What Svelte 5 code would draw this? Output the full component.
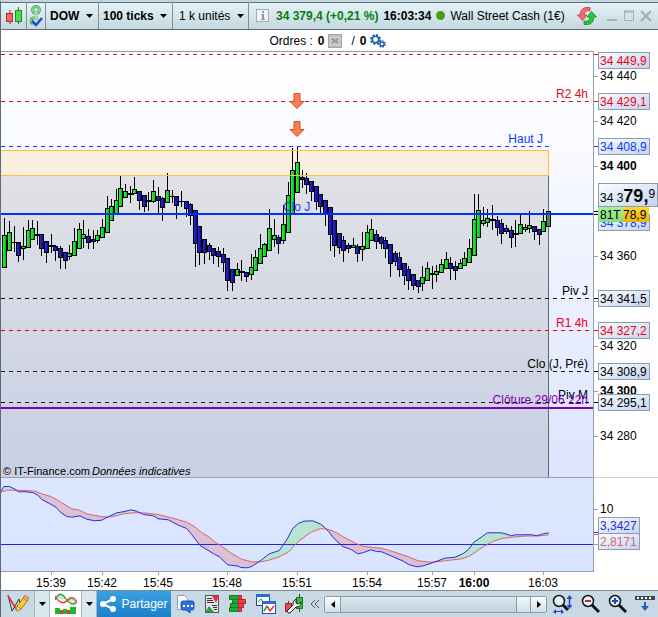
<script lang="ts">
  type Dir = 'up' | 'down' | 'flat';

  const AXIS_WIDTH = 64;
  const BASE_WIDTH = 594;
  const TOP = 51;
  const HEIGHT = 539;

  let width = $state(658);
  let plot = $derived(width - AXIS_WIDTH);
  let scale = $derived(plot / BASE_WIDTH);
  let label = $derived(plot + 4);

  const sx = (x: number) => Math.round(x * scale);

  // x, high, body top, body bottom, low, direction (g = up, b = down, d = flat)
  const raw = `4 218 235 268 268 g|9 221 232 251 251 g|14 226 242 243 252 d|18 242 242 256 262 b|23 227 246 249 260 g
28 220 230 248 248 g|32 220 228 240 240 g|37 221 234 236 245 d|41 234 234 249 256 b|46 241 241 253 263 b
51 234 245 247 253 d|55 245 246 251 261 b|60 246 248 258 269 b|65 252 252 261 269 b|69 245 253 257 260 g
74 228 241 256 256 g|79 223 229 249 249 g|83 220 234 239 248 g|88 229 236 243 249 b|93 230 239 242 249 b
97 230 235 241 243 g|102 219 227 238 238 g|107 196 208 233 233 g|111 199 206 221 221 g|116 189 200 214 214 g
120 176 188 207 207 g|125 184 191 198 198 g|130 186 193 195 203 d|134 177 189 194 194 g|139 191 191 201 210 b
144 195 195 207 212 b|148 192 200 202 211 d|153 180 191 202 203 g|158 187 196 201 213 b|162 197 198 208 221 b
167 173 190 203 203 g|172 190 196 197 203 d|176 196 196 206 219 b|181 191 201 202 207 d|186 201 201 209 217 b
190 203 204 216 225 b|195 210 210 244 267 b|199 226 226 253 265 b|204 239 239 253 264 b|209 243 245 252 260 b
213 248 248 256 264 b|218 247 251 257 267 b|223 248 254 263 272 b|227 258 258 281 291 b|232 269 269 283 291 b
237 263 269 276 276 g|241 260 271 273 281 d|246 272 272 277 282 b|251 254 267 275 280 g|255 250 257 271 271 g
260 234 248 264 264 g|264 243 244 257 257 g|269 209 228 251 251 g|274 219 235 240 247 g|278 235 237 244 254 b
283 205 224 241 244 g|288 182 195 233 233 g|292 148 170 214 214 g|297 147 162 193 193 g|302 170 177 180 188 b
306 173 178 185 194 b|311 181 181 192 201 b|316 186 186 202 210 b|320 194 194 207 214 b|325 200 200 215 226 b
330 207 207 235 251 b|334 220 220 246 257 b|339 233 233 248 254 b|343 236 240 251 262 b|348 243 245 249 253 b
353 238 245 248 248 g|357 244 246 254 262 b|362 232 246 250 261 g|367 225 232 249 249 g|371 219 229 241 241 g
376 230 234 242 249 b|381 236 237 244 249 b|385 237 240 249 258 b|390 244 244 264 277 b|395 251 253 262 266 b
399 252 257 270 277 b|404 263 263 276 285 b|408 266 269 281 290 b|413 274 274 286 290 b|418 280 280 287 293 b
422 266 277 284 291 g|427 262 268 281 281 g|432 266 273 275 289 d|436 265 271 275 282 g|441 259 264 273 273 g
446 252 259 269 269 g|450 257 263 269 280 b|455 261 266 271 280 b|460 259 263 269 269 g|464 252 258 266 266 g
469 239 248 263 263 g|474 194 219 256 256 g|478 194 210 238 238 g|483 207 220 224 226 g|487 209 218 223 227 g
492 205 219 221 230 d|497 216 220 228 236 b|501 219 223 234 244 b|506 225 228 232 234 b|511 226 230 238 248 b
515 220 233 235 247 d|520 215 224 234 234 g|525 224 227 230 232 g|529 211 225 229 233 g|534 226 226 232 240 b
539 229 229 235 245 b|543 209 221 232 232 g|548 211 211 227 227 g`;

  const dirs: Record<string, Dir> = { g: 'up', b: 'down', d: 'flat' };

  const candles = raw.split(/[|\n]/).map((row) => {
    const [x, high, top, bottom, low, dir] = row.trim().split(' ');
    return { x: +x, high: +high, top: +top, bottom: +bottom, low: +low, dir: dirs[dir] };
  });

  // Indicator samples, three steps to the pixel
  const fast = `3,122 12,108 28,108 45,116 55,124 80,124 100,127 115,135 125,147 150,160 168,170 180,184 200,198 215,200 240,196 260,206
285,211 305,209 325,199 350,187 375,183 392,178 410,182 430,192 460,196 475,205 505,208 535,224 560,234 575,252 600,285 630,303 640,309
658,319 683,343 715,347 722,351 740,352 755,348 785,328 808,310 838,300 862,265 878,234 895,219 912,212 938,211 962,221 975,232
990,248 1000,262 1028,288 1055,298 1073,310 1088,307 1112,298 1130,303 1145,304 1175,317 1210,332 1228,343 1252,349 1270,346 1300,336
1335,323 1365,320 1390,309 1405,297 1422,275 1448,257 1462,247 1505,247 1535,256 1545,253 1595,253 1610,256 1630,250 1646,247`;
  const slow = `3,125 20,119 55,119 105,122 125,130 150,137 170,147 185,157 215,175 238,179 260,190 285,195 310,199 335,199 370,190 400,187
430,187 475,192 525,205 560,215 580,226 605,246 628,260 645,275 665,287 695,309 715,320 725,326 755,334 785,334 810,328 835,320
865,305 893,275 915,258 935,244 960,235 975,235 990,238 1010,247 1035,262 1070,280 1088,287 1120,291 1145,293 1175,302 1225,319
1255,331 1295,335 1335,331 1385,325 1405,318 1425,306 1440,295 1462,282 1480,272 1505,264 1535,260 1570,257 1620,256 1646,253`;

  function curve(samples: string, k: number): string[] {
    return samples.split(/\s+/).map((s) => {
      const [x, y] = s.split(',').map(Number);
      return `${((x / 3) * k).toFixed(1)},${(450.5 + y / 3).toFixed(1)}`;
    });
  }

  let fastLine = $derived(curve(fast, scale));
  let slowLine = $derived(curve(slow, scale));
  let band = $derived([...fastLine, ...[...slowLine].reverse()].join(' '));
  let above = $derived(`0,478 0,492 ${slowLine.join(' ')} ${plot},535 ${plot},478`);

  const levels = [
    { y: 54, color: '#f00014', name: '', end: 0, text: 0, full: true },
    { y: 101, color: '#d8101c', name: 'R2 4h', end: 588, text: 98, full: true },
    { y: 146, color: '#0a3cff', name: 'Haut J', end: 543, text: 143, full: false },
    { y: 298, color: '#000', name: 'Piv J', end: 588, text: 295, full: true },
    { y: 330, color: '#f00014', name: 'R1 4h', end: 588, text: 327, full: true },
    { y: 371, color: '#000', name: 'Clo (J, Pré)', end: 588, text: 368, full: true },
    { y: 402, color: '#000', name: 'Piv M', end: 588, text: 399, full: true }
  ];

  const ticks = [
    { y: 76, text: '34 440' },
    { y: 121, text: '34 420' },
    { y: 166, text: '34 400', bold: true },
    { y: 256, text: '34 360' },
    { y: 301, text: '' },
    { y: 346, text: '34 320' },
    { y: 391, text: '34 300', bold: true },
    { y: 436, text: '34 280' },
    { y: 509, text: '10' },
    { y: 544, text: '' }
  ];

  const tags = [
    { y: 52, text: '34 449,9', color: '#f00014' },
    { y: 93, text: '34 429,1', color: '#f00014' },
    { y: 138, text: '34 408,9', color: '#0a3cff' },
    { y: 214, text: '34 378,9', color: '#0a3cff' },
    { y: 290, text: '34 341,5', color: '#000' },
    { y: 322, text: '34 327,2', color: '#f00014' },
    { y: 363, text: '34 308,9', color: '#000' },
    { y: 394, text: '34 295,1', color: '#000' }
  ];

  const times = [
    { x: 51, text: '15:39' },
    { x: 102, text: '15:42' },
    { x: 158, text: '15:45' },
    { x: 227, text: '15:48' },
    { x: 297, text: '15:51' },
    { x: 367, text: '15:54' },
    { x: 432, text: '15:57' },
    { x: 474, text: '16:00', bold: true },
    { x: 543, text: '16:03' }
  ];
</script>

{#snippet caret()}
  <svg class="caret" width="7" height="4" viewBox="0 0 7 4" aria-hidden="true"><path d="M0 0h7L3.5 4z" /></svg>
{/snippet}

<div class="window">
  <header class="titlebar">
    <button class="cell candle-button" aria-label="Style du graphique">
      <svg width="18" height="18" viewBox="0 0 18 18">
        <path d="M5 3v14" stroke="#a01c24" />
        <rect x="1.5" y="6.5" width="6" height="8" fill="#f0686c" stroke="#b42830" />
        <path d="M13.5 0v17" stroke="#118018" />
        <rect x="10.5" y="3.5" width="6" height="11" fill="#4ed850" stroke="#159020" />
      </svg>
    </button>
    <button class="cell link-button" aria-label="Lier">
      <svg width="14" height="22" viewBox="0 0 14 22">
        <g fill="none" stroke="#56ac62" stroke-width="3">
          <circle cx="7" cy="5" r="3.5" />
          <path d="M4 19c-3-2-2-6 1-6h4" />
        </g>
        <g fill="none" stroke="#a6e2aa">
          <circle cx="7" cy="5" r="3.5" />
          <path d="M7 5v9" stroke-width="2" />
          <path d="M4 19c-3-2-2-6 1-6h4" />
        </g>
        <path d="M3 16l4 4 6-7" fill="none" stroke="#1450d0" stroke-width="2.5" />
      </svg>
    </button>
    <label class="cell combo">
      <select aria-label="Instrument"><option>DOW</option></select>
      {@render caret()}
    </label>
    <label class="cell combo">
      <select aria-label="Unité de temps"><option>100 ticks</option></select>
      {@render caret()}
    </label>
    <label class="cell combo plain">
      <select aria-label="Historique"><option>1 k unités</option></select>
      {@render caret()}
    </label>
    <div class="quote">
      <button class="icon" aria-label="Informations">
        <svg width="13" height="13" viewBox="0 0 13 13">
          <rect x=".5" y=".5" width="12" height="12" fill="#f3f6f8" stroke="#a0acb4" />
          <path d="M6 2h2v2H6zM5 5h3v5h1v1H5v-1h1V6H5z" fill="#8e9aa2" />
        </svg>
      </button>
      <strong class="price">34 379,4 (+0,21 %)</strong>
      <strong>16:03:34</strong>
      <span class="dot"></span>
      <span>Wall Street Cash (1€)</span>
    </div>
    <div class="controls">
      <button class="icon refresh" aria-label="Actualiser">
        <svg width="20" height="18" viewBox="0 0 20 18">
          <path d="M13 .5C7-.5 3 2.500 3.300 8H.5L5.500 13.500 10 8H7.200c0-3 2-5 5.800-4z" fill="#f46a68" stroke="#cc343a" stroke-width=".8" />
          <path d="M7 17.500c6 1 10-2 9.700-7.500h2.800L14.500 4.500 10 10h2.800c0 3-2 5-5.800 4z" fill="#2cc438" stroke="#118a1c" stroke-width=".8" />
        </svg>
      </button>
      <button class="icon" aria-label="Réduire">
        <svg width="12" height="12" viewBox="0 0 12 12"><path d="M1 10h10" stroke="#a4b0b8" stroke-width="2" /></svg>
      </button>
      <button class="icon" aria-label="Agrandir">
        <svg width="12" height="12" viewBox="0 0 12 12">
          <path d="M1.5 1v9.5h9V1" fill="none" stroke="#a4b0b8" />
          <path d="M1 1.500h10" stroke="#a4b0b8" stroke-width="2" />
        </svg>
      </button>
      <button class="icon" aria-label="Fermer">
        <svg width="12" height="12" viewBox="0 0 12 12"><path d="M1 1l10 10M11 1L1 11" stroke="#a0acb4" stroke-width="2" /></svg>
      </button>
    </div>
  </header>

  <div class="orders">
    <span>Ordres :</span>
    <strong>0</strong>
    <button class="icon" aria-label="Annuler les ordres">
      <svg width="14" height="14" viewBox="0 0 14 14">
        <rect x=".5" y=".5" width="13" height="13" fill="#c2c2c2" stroke="#a4a4a4" />
        <path d="M2 4l3-1 2 2 3-2 2 1-2 3 2 3-2 1-3-2-3 2-2-1 2-3z" fill="#9c9c9c" stroke="#eee" stroke-width=".8" />
      </svg>
    </button>
    <span class="slash">/</span>
    <strong>0</strong>
    <button class="icon" aria-label="Réglages des ordres">
      <svg width="16" height="14" viewBox="0 0 16 14">
        <g fill="none" stroke="#1c5cb0">
          <circle cx="5.5" cy="5.5" r="4.5" stroke-width="2" stroke-dasharray="2 1.53" />
          <circle cx="5.5" cy="5.5" r="3.2" stroke-width="1.6" />
          <circle cx="12" cy="10" r="3" stroke-width="1.5" stroke-dasharray="1.6 1.1" />
          <circle cx="12" cy="10" r="2" stroke-width="1.3" />
        </g>
      </svg>
    </button>
  </div>

  <main class="chart" bind:clientWidth={width}>
    <svg {width} height={HEIGHT} viewBox="0 {TOP} {width} {HEIGHT}" role="img" aria-label="DOW 100 ticks">
      <defs>
        <linearGradient id="sky" x1="0" y1="51" x2="0" y2="571" gradientUnits="userSpaceOnUse">
          <stop offset="0" stop-color="#ffffff" />
          <stop offset=".16" stop-color="#fafbff" />
          <stop offset=".75" stop-color="#dfe7ff" />
          <stop offset="1" stop-color="#d9e4ff" />
        </linearGradient>
        <linearGradient id="tag" x1="0" y1="0" x2="1" y2="1">
          <stop offset="0" stop-color="#fbfdff" />
          <stop offset="1" stop-color="#c3d3ef" />
        </linearGradient>
        <linearGradient id="gold" x1="0" y1="0" x2="0" y2="1">
          <stop offset="0" stop-color="#ffd83a" />
          <stop offset="1" stop-color="#efb400" />
        </linearGradient>
        <linearGradient id="mint" x1="0" y1="0" x2="0" y2="1">
          <stop offset="0" stop-color="#a6f29a" />
          <stop offset="1" stop-color="#7fdc7c" />
        </linearGradient>
        <linearGradient id="up" x1="0" x2="1">
          <stop offset="0" stop-color="#30f040" />
          <stop offset="1" stop-color="#00c010" />
        </linearGradient>
        <linearGradient id="down" x1="0" x2="1">
          <stop offset="0" stop-color="#2a2ad8" />
          <stop offset="1" stop-color="#0c0c98" />
        </linearGradient>
        <clipPath id="above"><polygon points={above} /></clipPath>
      </defs>

      <rect x="0" y="51" width={plot} height="521" fill="url(#sky)" />

      <g shape-rendering="crispEdges">
        <rect x="0" y="150" width={sx(549)} height="26" fill="#f8efdf" />
        <rect x="0" y="176" width={sx(548)} height="301" fill="#1a1000" fill-opacity=".1" />
        <rect x={sx(548)} y="176" width="1" height="301" fill="#666" />

        {#each levels as level}
          <line class="dash" x1="1" x2={level.full ? plot : sx(549)} y1={level.y + 0.5} y2={level.y + 0.5} stroke={level.color} />
        {/each}

        {#each candles as c, i}
          {@const x = sx(c.x)}
          <rect {x} y={c.high} width="1" height={c.low - c.high} />
          {#if c.dir === 'flat'}
            <rect x={x - 3} y={c.top} width="7" height={c.bottom - c.top} />
          {:else}
            <rect x={x - 2} y={c.top} width="5" height={c.bottom - c.top} />
            <rect
              x={x - 1}
              y={c.top + 1}
              width="3"
              height={c.bottom - c.top - 2}
              fill={i === candles.length - 1 ? '#4e8a50' : `url(#${c.dir})`}
            />
          {/if}
        {/each}

        <path d="M0 150.5H{sx(548) + 0.5}V175.5H0" fill="none" stroke="#ffbf3c" />
        <rect x="0" y="213" width={plot} height="2" fill="#0032ff" />
        <rect x="0" y="407" width={plot} height="2" fill="#7d00b4" />
      </g>

      {#each levels as level}
        {#if level.name}
          <text x={sx(level.end)} y={level.text} text-anchor="end" fill={level.color}>{level.name}</text>
        {/if}
      {/each}
      <text x={sx(283)} y="211" fill="#1a3cff">Clo J</text>
      <text x={sx(588)} y="404" text-anchor="end" fill="#7d00b4">Clôture 29/06 22h</text>

      {#each [93, 121] as y}
        <path
          transform="translate({sx(290)} {y})"
          d="M4 .5h6v8h4L7 15.5 0 8.5h4z"
          fill="#ff7f48"
          stroke="#c4532c"
        />
      {/each}

      <text class="small" x="3" y="475">© IT-Finance.com</text>
      <text class="small italic" x="92" y="475">Données indicatives</text>

      <polygon points={band} fill="#dcc0d4" />
      <polygon points={band} fill="#b8e4d2" clip-path="url(#above)" />
      <rect x="0" y="544" width={plot} height="1" fill="#2424dc" />
      <polyline points={slowLine.join(' ')} fill="none" stroke="#d86470" />
      <polyline points={fastLine.join(' ')} fill="none" stroke="#2c2cdc" />

      <g shape-rendering="crispEdges" fill="#93a1ab">
        <rect x="0" y="51" width={plot} height="1" />
        <rect x="0" y="477" width={plot} height="1" />
        <rect x={plot} y="477" width={AXIS_WIDTH} height="1" fill="#d4d4d4" />
        <rect x="0" y="571" width={plot} height="1" />
        <rect x={plot - 1} y="51" width="1" height="521" />
        <rect x="0" y="51" width="1" height={HEIGHT} fill="#5c6b78" />
        {#each ticks as tick}
          <rect x={plot} y={tick.y} width="4" height="1" />
        {/each}
        {#each levels as level}
          <rect x={plot} y={level.y} width="4" height="1" fill={level.color} />
        {/each}
        <rect x={plot} y="211" width="4" height="1" fill="#000" />
        <rect x={plot} y="214" width="4" height="1" fill="#000" />
        <rect x={plot} y="532" width="4" height="1" fill="#2c2cdc" />
        <rect x={plot} y="534" width="4" height="1" fill="#d86470" />
        {#each times as time}
          <rect x={sx(time.x)} y="572" width="1" height="3" />
        {/each}
      </g>

      {#each ticks as tick}
        <text x={label + 2} y={tick.y + 4} class:bold={tick.bold}>{tick.text}</text>
      {/each}

      {#each tags as tag}
        <rect class="tag" x={label + 0.5} y={tag.y + 0.5} width="51" height="16" />
        <text x={label + 2} y={tag.y + 13} fill={tag.color}>{tag.text}</text>
      {/each}

      <rect class="tag" x={label + 0.5} y="183.5" width="59" height="23" />
      <text x={label + 2} y="202">34 3<tspan class="big">79,</tspan><tspan dy="-4">9</tspan></text>
      <rect x={label + 25} y="207" width="26" height="15" fill="url(#gold)" />
      <text x={label + 25} y="219">78,9</text>
      <rect x={label} y="207" width="25" height="15" fill="url(#mint)" />
      <text x={label + 2} y="219">81T</text>

      <rect class="tag" x={label + 0.5} y="517.5" width="41" height="16" />
      <text x={label + 2} y="530" fill="#2c2cdc">3,3427</text>
      <rect class="tag" x={label + 0.5} y="533.5" width="41" height="16" />
      <text x={label + 2} y="546" fill="#d86470">2,8171</text>

      {#each times as time}
        <text x={sx(time.x)} y="587" text-anchor="middle" class:bold={time.bold}>{time.text}</text>
      {/each}
    </svg>
  </main>

  <footer class="toolbar">
    <button class="tool draw" aria-label="Outils de dessin">
      <svg width="22" height="20" viewBox="0 0 22 20">
        <path d="M1 1l4 16 7-12 2 10" fill="none" stroke="#303840" />
        <path d="M1 2l9 14" stroke="#e82028" stroke-width="1.5" />
        <path d="M10 12l7-9 4 3-7 9-4 2z" fill="#ffc830" stroke="#a87410" />
        <path d="M16 4l2-3 4 3-2 3z" fill="#f0a078" stroke="#a87410" stroke-width=".7" />
        <path d="M10 12l-1 5 5-2z" fill="#f4ddb0" stroke="#a87410" stroke-width=".7" />
      </svg>
    </button>
    <button class="tool drop" aria-label="Plus d'outils de dessin">{@render caret()}</button>
    <button class="tool indicator" aria-label="Indicateurs">
      <svg width="22" height="22" viewBox="0 0 22 22">
        <path d="M0 7C4-1 7 0 11 6s8 6 11 3v-3c-3-3-6-5-9-2S5 8 0 3z" fill="#cdeacf" />
        <path d="M0 7C4-1 7 0 11 6s8 6 11 3" fill="none" stroke="#28a040" stroke-width="1.3" />
        <path d="M0 3c5 8 9 8 13 4s6-1 9 2" fill="none" stroke="#e83030" stroke-width="1.3" />
        <path d="M0 15h5v2h3v-1h4v1h3v-3h6v7H0z" fill="#18b828" />
        <path d="M5 17h3v4H5zM12 17h3v4h-3z" fill="#e83030" />
      </svg>
    </button>
    <button class="tool drop" aria-label="Plus d'indicateurs">{@render caret()}</button>
    <button class="share">
      <svg width="16" height="16" viewBox="0 0 16 16" aria-hidden="true">
        <path d="M13 3L3 8l10 5" fill="none" stroke="#fff" stroke-width="2" />
        <g fill="#fff"><circle cx="3" cy="8" r="3" /><circle cx="13" cy="3" r="3" /><circle cx="13" cy="13" r="3" /></g>
      </svg>
      Partager
    </button>
    <div class="tools">
      <button class="icon" aria-label="Messages">
        <svg width="19" height="19" viewBox="0 0 19 19">
          <path d="M1.5.5h7l3 3v11h-10z" fill="#fff" stroke="#8a9cac" />
          <path d="M7 6h9q2 0 2 2v5q0 2-2 2h-2v3l-4-3H7q-2 0-2-2V8q0-2 2-2z" fill="#2f6fe0" stroke="#1c52b4" />
          <path d="M7 10h2v2H7zM11 10h2v2h-2zM15 10h2v2h-2z" fill="#fff" />
        </svg>
      </button>
      <button class="icon" aria-label="Liste des ordres">
        <svg width="16" height="18" viewBox="0 0 16 18">
          <rect x="1.5" y=".5" width="13" height="17" fill="#e4e4e4" stroke="#555" />
          <path d="M3 3.500h5M3 5.500h6M3 7.500h7M8 10.500h5M9 12.500h4M10 14.500h3" stroke="#333" />
          <path d="M8 1h7l-3 7z" fill="#e83048" />
          <path d="M1 17l4-6 5 6z" fill="#28a838" />
        </svg>
      </button>
      <button class="icon" aria-label="Carnet d'ordres">
        <svg width="18" height="18" viewBox="0 0 18 18">
          <g fill="#1ea834" stroke="#0e7c20">
            <path d="M.5.5h9v4h-9zM3.500 4.500h6v4h-6zM1.500 8.500h8v4h-8zM.5 12.500h9v4h-9z" />
          </g>
          <g fill="#ee4048" stroke="#b82028">
            <path d="M9.500.5h3v4h-3zM9.500 4.500h7v4h-7zM9.500 8.500h5v4h-5zM9.500 12.500h3v4h-3z" />
          </g>
        </svg>
      </button>
      <button class="icon" aria-label="Fenêtres">
        <svg width="20" height="20" viewBox="0 0 20 20">
          <rect x=".5" y=".5" width="13" height="11" fill="#fff" stroke="#1c50a8" />
          <path d="M0 0h14v3H0z" fill="#2b6ccc" />
          <path d="M2 8l3-3 3 4" fill="none" stroke="#20a030" />
          <rect x="6.5" y="7.5" width="13" height="12" fill="#fff" stroke="#1c50a8" />
          <path d="M6 7h14v3H6z" fill="#2b6ccc" />
          <path d="M8 17l3-5" stroke="#20a030" stroke-width="1.5" />
          <path d="M11 12l3 5 4-5" fill="none" stroke="#e83030" stroke-width="1.5" />
        </svg>
      </button>
      <button class="icon" aria-label="Réglages">
        <svg width="18" height="20" viewBox="0 0 18 20">
          <path d="M3.500 7v12M14.500 0v18" stroke="#444" />
          <rect x=".5" y="9.5" width="6" height="8" fill="#e84850" stroke="#a82028" />
          <rect x="11.5" y="3.5" width="6" height="11" fill="#30c040" stroke="#148020" />
          <path d="M2 17l6-6q-1-4 3-6v4l2 1 3-2q0 5-5 5l-6 6q-2 1-3-2z" fill="#f4f4f4" stroke="#222" />
        </svg>
      </button>
    </div>
    <button class="icon collapse" aria-label="Replier">
      <svg width="10" height="10" viewBox="0 0 10 10"><path d="M5 1L1 5l4 4M9 1L5 5l4 4" fill="none" stroke="#4c5860" /></svg>
    </button>
    <div class="scroll">
      <button aria-label="Défiler à gauche"><svg width="4" height="7" viewBox="0 0 4 7"><path d="M4 0v7L0 3.5z" /></svg></button>
      <input type="range" min="0" max="100" value="100" aria-label="Défilement" />
      <button aria-label="Défiler à droite"><svg width="4" height="7" viewBox="0 0 4 7"><path d="M0 0v7l4-3.5z" /></svg></button>
    </div>
    <div class="zooms">
      <button class="icon" aria-label="Ajuster">
        <svg width="21" height="20" viewBox="0 0 21 20">
          <circle cx="7" cy="7" r="5.5" fill="#e4f2fa" stroke="#111" stroke-width="1.5" />
          <path d="M11 11l5 5" stroke="#111" stroke-width="3" />
          <path d="M17.5 3v10" stroke="#1c48c8" stroke-width="1.5" />
          <path d="M14.5 5l3-4 3 4zM14.5 11l3 4 3-4zM4 15l-3 3 3 2zM9 15l3 3-3 2z" fill="#1c48c8" />
          <path d="M3 17.500h7" stroke="#1c48c8" />
        </svg>
      </button>
      <button class="icon" aria-label="Zoom arrière">
        <svg width="19" height="20" viewBox="0 0 19 20">
          <circle cx="7" cy="7" r="5.5" fill="#e4f2fa" stroke="#111" stroke-width="1.5" />
          <path d="M11 11l7 7" stroke="#111" stroke-width="3" />
          <path d="M4 7h6" stroke="#e02028" stroke-width="2" />
        </svg>
      </button>
      <button class="icon" aria-label="Zoom avant">
        <svg width="19" height="20" viewBox="0 0 19 20">
          <circle cx="7" cy="7" r="5.5" fill="#e4f2fa" stroke="#111" stroke-width="1.5" />
          <path d="M11 11l7 7" stroke="#111" stroke-width="3" />
          <path d="M4 7h6M7 4v6" stroke="#1c48c8" stroke-width="2" />
        </svg>
      </button>
      <button class="icon" aria-label="Disposition">
        <svg width="20" height="20" viewBox="0 0 20 20">
          <path d="M0 4h20" stroke="#3c4850" stroke-width="4" />
          <path d="M2 4h2M6 4h2M10 4h2M14 4h2" stroke="#fff" stroke-width="2" />
          <path d="M10 8v5" stroke="#1c64c0" stroke-width="2" />
          <path d="M6 12h8l-4 5z" fill="#1c64c0" />
        </svg>
      </button>
    </div>
  </footer>
</div>

<style>
  :global(body) {
    margin: 0;
    background: #fff;
  }

  .window {
    display: flex;
    flex-direction: column;
    font: 12px/14px 'Liberation Sans', Arial, sans-serif;
    color: #000;
  }

  button {
    display: flex;
    align-items: center;
    justify-content: center;
    margin: 0;
    padding: 0;
    border: 0;
    background: none;
    font: inherit;
    color: inherit;
  }

  svg {
    display: block;
    flex: none;
  }

  .titlebar {
    display: flex;
    box-sizing: border-box;
    height: 30px;
    border-top: 2px solid #c5d3dc;
    border-bottom: 1px solid #5c6f7c;
    border-left: 1px solid #5c6b78;
    background: linear-gradient(#5c6f7c 1px, #e4f3f7 1px, #c5d6e0);
    white-space: nowrap;
  }

  .cell {
    box-sizing: border-box;
    border-right: 1px solid #7d909d;
  }

  .candle-button {
    width: 26px;
  }

  .link-button {
    width: 19px;
  }

  .combo {
    display: flex;
    align-items: center;
    gap: 6px;
    padding: 0 5px 0 4px;
  }

  .combo.plain {
    padding: 0 4px 0 6px;
  }

  select {
    margin: 0;
    padding: 0;
    border: 0;
    background: none;
    appearance: none;
    font: inherit;
    font-weight: bold;
    color: inherit;
  }

  .plain select {
    font-weight: normal;
  }

  .quote {
    display: flex;
    align-items: center;
    gap: 5px;
    padding-left: 7px;
  }

  .quote .icon {
    margin-right: 2px;
  }

  .price {
    color: #087c10;
  }

  .dot {
    width: 9px;
    height: 9px;
    border-radius: 50%;
    background: #4a9c10;
  }

  .controls {
    display: flex;
    align-items: center;
    gap: 5px;
    margin-left: auto;
    padding-right: 6px;
  }

  .refresh {
    margin-right: 4px;
  }

  .orders {
    display: flex;
    align-items: center;
    justify-content: center;
    gap: 5px;
    height: 21px;
    padding-right: 4px;
    border-left: 1px solid #5c6b78;
  }

  .orders .icon {
    margin-left: -2px;
  }

  .slash {
    margin-left: 5px;
  }

  .chart {
    overflow: hidden;
  }

  .chart text {
    font-size: 12px;
  }

  .chart .bold {
    font-weight: bold;
  }

  .chart .small {
    font-size: 11px;
  }

  .chart .italic {
    font-style: italic;
  }

  .chart .big {
    font-size: 18px;
    font-weight: bold;
  }

  .dash {
    stroke-dasharray: 4 4;
  }

  .tag {
    fill: url(#tag);
    stroke: #8d9dab;
  }

  .toolbar {
    display: flex;
    box-sizing: border-box;
    height: 27px;
    border-top: 1px solid #7d8c98;
    border-left: 1px solid #5c6b78;
    background: #c8d9e3;
  }

  .tool {
    box-sizing: border-box;
    border-right: 1px solid #a4b6c2;
  }

  .draw {
    width: 34px;
  }

  .drop {
    width: 15px;
    background: #dbe7ee;
  }

  .indicator {
    width: 32px;
    background: #fff;
  }

  .share {
    gap: 5px;
    width: 74px;
    background: linear-gradient(#3aa0e4, #1b80c8);
    color: #fff;
  }

  .tools {
    display: flex;
    align-items: center;
    gap: 9px;
    padding-left: 5px;
  }

  .collapse {
    padding: 0 4px 0 7px;
  }

  .scroll {
    display: flex;
    flex: 1;
    align-self: center;
    box-sizing: border-box;
    height: 17px;
    border: 1px solid #8a9ba8;
    border-radius: 2px;
  }

  .scroll button {
    width: 15px;
    background: linear-gradient(#fff, #d0dee6);
  }

  .scroll input {
    flex: 1;
    min-width: 0;
    margin: 0;
    border: solid #8a9ba8;
    border-width: 0 1px;
    background: linear-gradient(#dce8ee, #c2d2dc);
    appearance: none;
  }

  .scroll input::-webkit-slider-thumb {
    box-sizing: border-box;
    width: 14px;
    height: 15px;
    border-left: 1px solid #8a9ba8;
    background: linear-gradient(#f4f9fb, #d0dee6);
    appearance: none;
  }

  .zooms {
    display: flex;
    align-items: center;
    gap: 8px;
    padding: 0 3px 0 5px;
  }
</style>
